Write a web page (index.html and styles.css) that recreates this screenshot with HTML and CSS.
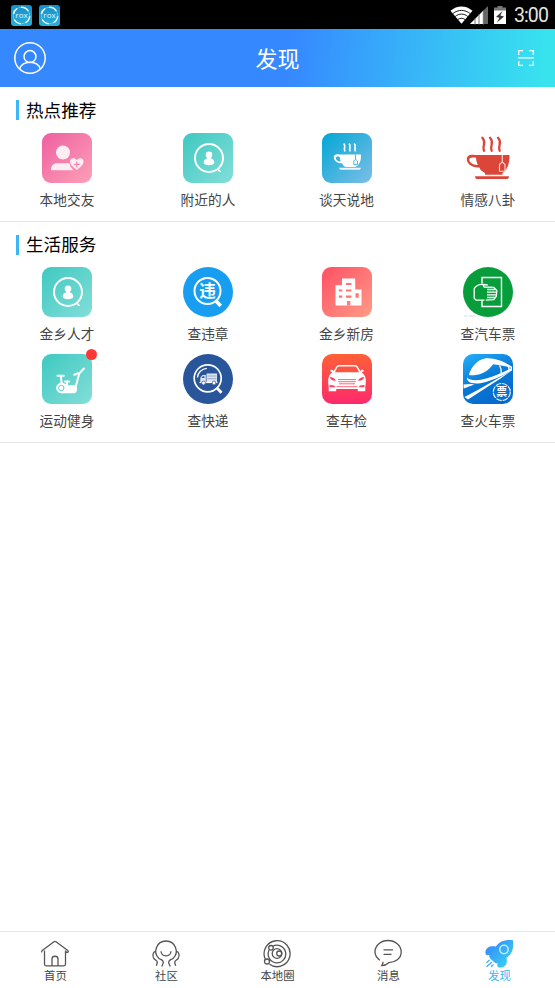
FILE: index.html
```
<!DOCTYPE html>
<html lang="zh-CN">
<head>
<meta charset="utf-8">
<title>发现</title>
<link rel="stylesheet" href="styles.css">
</head>
<body>
<svg class="defs" width="0" height="0" aria-hidden="true">
  <defs>
    <linearGradient id="pink" x1="0" y1="0" x2="1" y2="1"><stop offset="0" stop-color="#ef5fa0"/><stop offset="1" stop-color="#fca0b8"/></linearGradient>
    <linearGradient id="teal" x1="0" y1="0" x2="1" y2="1"><stop offset="0" stop-color="#3ec9c1"/><stop offset="1" stop-color="#83ded8"/></linearGradient>
    <linearGradient id="blue" x1="0" y1="0" x2="1" y2="1"><stop offset="0" stop-color="#02a6d6"/><stop offset="1" stop-color="#7dbfe6"/></linearGradient>
    <linearGradient id="coral" x1="0" y1="0" x2="1" y2="1"><stop offset="0" stop-color="#ff5065"/><stop offset="1" stop-color="#ff9c86"/></linearGradient>
    <linearGradient id="fire" x1="0" y1="0" x2="0" y2="1"><stop offset="0" stop-color="#fe6037"/><stop offset="1" stop-color="#fe2a6c"/></linearGradient>
    <linearGradient id="rail" x1="0" y1="0" x2=".5" y2="1"><stop offset="0" stop-color="#24b0fb"/><stop offset=".6" stop-color="#0878d5"/><stop offset="1" stop-color="#076bcd"/></linearGradient>
    <linearGradient id="rocket" x1="0" y1="0" x2="1" y2="1"><stop offset=".1" stop-color="#3688ff"/><stop offset="1" stop-color="#38ddec"/></linearGradient>
    <linearGradient id="app" x1="0" y1="0" x2="0" y2="1"><stop offset="0" stop-color="#168fc9"/><stop offset="1" stop-color="#28b0dc"/></linearGradient>
    <g id="rox">
      <rect width="21" height="21" rx="3" fill="url(#app)"/>
      <circle cx="10.5" cy="10.5" r="8.2" fill="none" stroke="#6cc4e4" stroke-width="1"/>
      <path d="M10 2.3A8.2 8.2 0 0 1 17.3 6M18.7 11A8.2 8.2 0 0 1 14.5 17.7M10 18.7A8.2 8.2 0 0 1 3.2 14.5M2.4 9A8.2 8.2 0 0 1 6 3.6" fill="none" stroke="#e9f8fd" stroke-width="1.5"/>
      <text x="10.5" y="12.7" class="rox-text">rox</text>
    </g>
    <g id="person">
      <circle cx="26" cy="25" r="14" fill="none" stroke="#fff" stroke-width="2"/>
      <path d="M34.7 35.6L38 38.8L35 37.5" fill="#fff" stroke="#fff" stroke-width="1"/>
      <circle cx="26" cy="21.8" r="3.3" fill="#fff"/>
      <path d="M24.5 23.500h3v1.700c2.300.5 3.800 2.200 3.800 4.400c0 2-2.200 2.600-5.300 2.600s-5.300-.6-5.300-2.600c0-2.200 1.500-3.900 3.800-4.400z" fill="#fff"/>
    </g>
  </defs>
</svg>

<div class="phone">
  <div class="status">
    <svg width="21" height="21" viewBox="0 0 21 21"><use href="#rox"/></svg>
    <svg width="21" height="21" viewBox="0 0 21 21"><use href="#rox"/></svg>
    <svg class="signals" width="58" height="20" viewBox="0 0 58 20">
      <path d="M0.5 5.8C7 .1 16 .1 22.5 5.8L11.5 18.8z" fill="#fff"/>
      <path d="M2.7 8.7C8 4.3 15 4.3 20.3 8.7M5.2 11.5C9 8.3 14 8.3 17.8 11.5M7.9 14.5C10 12.9 13 12.9 15.1 14.5" fill="none" stroke="#000" stroke-width=".9"/>
      <path d="M20 19L38 1v18z" fill="#666"/>
      <path d="M20 19L33.5 5.5V19z" fill="#fff"/>
      <path d="M25 13v7M29 9v11M33.3 5v15" stroke="#555" stroke-width=".8"/>
      <path d="M44 6V2.5h3.5V1h5v1.5H56V6z" fill="#777"/>
      <path d="M44 5.5h12v13.5H44z" fill="#fff"/>
      <path d="M52.5 6L46 12l3.5.8L47 17.5l7-6l-3.700-1z" fill="#333"/>
    </svg>
    <span class="clock">3:00</span>
  </div>

  <header class="appbar">
    <svg width="32" height="32" viewBox="0 0 32 32" fill="none" stroke="#fff" stroke-width="1.5">
      <circle cx="16" cy="16" r="15.2"/><circle cx="16" cy="14.6" r="6"/><path d="M5.8 27.2C7.3 17.9 24.7 17.9 26.2 27.2"/>
    </svg>
    <h1>发现</h1>
    <svg width="16" height="16" viewBox="0 0 16 16" fill="none" stroke="#fff" stroke-width="1.3">
      <path d="M.7 5V.7H5M11 .7h4.3V5M.7 11v4.3H5M11 15.3h4.3V11M0 7.8h16"/>
    </svg>
  </header>

  <section class="block">
    <h2>热点推荐</h2>
    <div class="grid">
      <a class="item">
        <svg viewBox="0 0 50 50"><rect width="50" height="50" rx="9" fill="url(#pink)"/>
          <g fill="#ffedf4"><circle cx="21" cy="19.5" r="7"/><path d="M9 37.2c0-4.8 2.2-7 6.5-7h12c.4 3.2 2 5.1 4.3 7z"/>
          <path d="M34.8 37C31 33.8 28 31.5 28 28.5c0-3.6 4.5-4.6 6.8-1.3c2.3-3.3 6.8-2.3 6.8 1.3c0 3-3 5.3-6.8 8.5z"/></g>
          <path d="M34.8 28.4v6M31.8 31.4h6" stroke="#f785ab" stroke-width="1.2"/>
        </svg><span>本地交友</span></a>
      <a class="item">
        <svg viewBox="0 0 50 50"><rect width="50" height="50" rx="9" fill="url(#teal)"/><use href="#person"/></svg><span>附近的人</span></a>
      <a class="item">
        <svg viewBox="0 0 50 50"><rect width="50" height="50" rx="9" fill="url(#blue)"/>
          <path d="M21.7 10.5c3 3.3-.8 3.5 1.2 8M27 10.5c3 3.3-.8 3.5 1.2 8M32.2 10.5c3 3.3-.8 3.5 1.2 8" fill="none" stroke="#fff" stroke-width="1.7"/>
          <path d="M17.5 21.5H39c.2 6-1.2 10-5.5 12.6H23.5c-1.6-1-2.7-2.2-3.4-3.8c-5.7.3-8.5-3.2-8.3-6.3c.2-2.5 2.8-3.2 5.7-2.5zM17.6 23.7c-2.3-.5-3.8-.1-3.7 1.5c.1 1.8 1.9 3.3 4.7 3.2z" fill="#fff" fill-rule="evenodd"/>
          <path d="M33.5 21.5v5M33.5 26.3l2 1.7v3.6h-3.7v-3.6z" fill="none" stroke="#40add6" stroke-width=".9"/><path d="M17 34.8h22c-.5 1.6-1 2-2 2H19c-1 0-1.5-.4-2-2z" fill="#e8f7fd"/>
        </svg><span>谈天说地</span></a>
      <a class="item">
        <svg viewBox="0 0 50 50"><path d="M19.3 4.8c5 5.3-.7 7 1.7 13M27 4.8c5 5.3-.7 7 1.7 13M35 4.8c5 5.3-.7 7 1.7 13" fill="none" stroke="#dc4639" stroke-width="2.3" stroke-linecap="round"/>
          <path d="M12.5 22H46.5c.3 9-2.7 15.5-7 18v1.8H22V40c-3-1.5-4.5-3-5.7-5.5C8 35 3.7 30 3.8 26c.1-4.1 4-5 8.7-4zM13 24.7c-4.3-.8-6.7-.1-6.7 2.1c.2 3 3.8 5.4 8.5 5.1c-1-2.2-1.6-4.5-1.8-7.2z" fill="#dc4639" fill-rule="evenodd"/>
          <path d="M39.3 22v7M39.3 28.8l2.7 2.7v6.7h-5.5v-6.7z" fill="none" stroke="#ffdcd7" stroke-width="1.1"/><path d="M12 43.3h34c0 1.9-1 2.8-2.6 2.8H14.6c-1.6 0-2.6-.9-2.6-2.8z" fill="#dc4639"/>
        </svg><span>情感八卦</span></a>
    </div>
  </section>

  <section class="block services">
    <h2>生活服务</h2>
    <div class="grid">
      <a class="item">
        <svg viewBox="0 0 50 50"><rect width="50" height="50" rx="9" fill="url(#teal)"/><use href="#person"/></svg><span>金乡人才</span></a>
      <a class="item">
        <svg viewBox="0 0 50 50"><circle cx="25" cy="25" r="25" fill="#189ef0"/>
          <circle cx="24.5" cy="24" r="13" fill="none" stroke="#fff" stroke-width="2"/><path d="M32.5 33.2l5.2 5.8" stroke="#fff" stroke-width="3.6"/>
          <text x="24.5" y="30" class="badge-char">违</text>
        </svg><span>查违章</span></a>
      <a class="item">
        <svg viewBox="0 0 50 50"><rect width="50" height="50" rx="9" fill="url(#coral)"/>
          <path d="M20 11.5h13.2v11h6.3v16H13.5V18.3H20z" fill="#fff"/>
          <path d="M24 17h5.5M16.8 23.5h3.5M24 23.5h5.5M16.8 29.7h3.5M24 29.7h5.5" stroke="#ff7474" stroke-width="2.2"/><path d="M33.5 26.3h3.3v4.4h-3.3zM25 34h3.4v4.5H25z" fill="#ff7d77"/>
        </svg><span>金乡新房</span></a>
      <a class="item">
        <svg viewBox="0 0 50 50"><circle cx="25" cy="25" r="25" fill="#069d3a"/>
          <path d="M19 16.5V10.5h19.5v29H19v-6.5" fill="none" stroke="#fff" stroke-width="1.4"/>
          <path d="M22 33.2h-9.5l-1.3-2v-9.5c2.3-3.6 5.2-4.7 9-4.2l4.8.8l1.2 1.6l5 .6c1.8.5 1.3 2 0 2.2c2.5 0 3.3 2.2 1.5 2.6c2 .3 1.5 2.7-.5 2.7c1 .8.5 2.5-1 2.6c.3 1.7-.5 2.6-2 2.6z" fill="#069d3a"/>
          <path d="M21.5 33.2H13l-1.8-2v-9.5c2.3-3.6 5.2-4.7 9-4.2l4.5.5M20 17.8l1.2 2.2l9.6.3l3 3.2l-.5 5.7l-2.5 3.5l-8 .5M24 22.5h8M24 25.2h10M24 27.9h9.5M24 30.5h8" fill="none" stroke="#fff" stroke-width="1.3"/>
          <path d="M1 49h4M6 49h6" stroke="#d6dcd7" stroke-width="1"/>
        </svg><span>查汽车票</span></a>
      <a class="item">
        <svg viewBox="0 0 50 50"><rect width="50" height="50" rx="9" fill="url(#teal)"/>
          <path d="M17 29c4-1.5 6 1.7 9.5 2.2h5.8c4 0 3.6 8-.2 8H19.5z" fill="#fff"/>
          <circle cx="19.5" cy="34" r="5.3" fill="#fff"/><circle cx="19.3" cy="34" r="2.7" fill="none" stroke="#58d0ca" stroke-width="1"/>
          <path d="M15.5 21.8h6.3M18.8 22.3l1 7.2M33.5 33.5l3.7-13.8l4.7-5.2M32.3 20.8l3.9-1.6M23 27.5h4.2M25 27.5v4" fill="none" stroke="#fff" stroke-width="2" stroke-linecap="round"/><path d="M18 35.3l2.8-2.6" stroke="#fff" stroke-width="1.2"/>
        </svg><i class="dot"></i><span>运动健身</span></a>
      <a class="item">
        <svg viewBox="0 0 50 50"><circle cx="25" cy="25" r="25" fill="#29559b"/>
          <circle cx="24.7" cy="24.3" r="13.5" fill="none" stroke="#fff" stroke-width="1.7"/><path d="M33.5 33.5l5 5.3" stroke="#fff" stroke-width="2.8"/>
          <path d="M14.4 23.5c.4-5 4.3-8.7 9.4-9.2" fill="none" stroke="#fff" stroke-width="1.3"/>
          <path d="M23.500 19.500h10.500v8.800H23.500zM17.300 28.300v-4.500l2.200-2.800h3.300v7.300z" fill="#dce5f1"/><path d="M24.300 22h9M24.300 24.700h9" stroke="#7e99c5" stroke-width=".8"/><path d="M18.600 24l1.300-1.800h1.500V24z" fill="#29559b"/><path d="M16.500 28.500h18" stroke="#fff" stroke-width="1.200"/><g fill="#fff" stroke="#29559b" stroke-width=".7"><circle cx="20.500" cy="29" r="1.900"/><circle cx="31" cy="29" r="1.900"/></g>
        </svg><span>查快递</span></a>
      <a class="item">
        <svg viewBox="0 0 50 50"><rect width="50" height="50" rx="10" fill="url(#fire)"/>
          <path d="M14.5 12.3c.8-1 1.7-1.3 3.5-1.3h14c1.8 0 2.7.3 3.5 1.3l3 5c.4-1.8 3.4-2 3.2-.2c-.2.8-1.3 1.1-2 1.1c3 2.3 4 4.7 4.1 8.2c.1 3-.3 4.500-.5 6v4.8h-7.500v-2.200H14.200v2.200H6.700v-4.800c-.2-1.500-.6-3-.5-6c.1-3.500 1.100-5.900 4.100-8.200c-.7 0-1.800-.3-2-1.100c-.2-1.800 2.800-1.600 3.200.2z" fill="#fff"/>
          <path d="M15.4 13.500c.5-.8 1.300-1 2.600-1h14c1.300 0 2.100.2 2.600 1l2.600 4.700H12.800z" fill="#fe5442"/>
          <path d="M16 25.600h18M16.300 27.700h17.400M17 29.800h16M14.500 32.700h21" stroke="#fe5565" stroke-width=".9"/><path d="M7.800 23c2.500 0 4.700 1.200 6.300 3.600c-3 .5-5.600-.4-6.300-3.600zM42.200 23c-2.500 0-4.700 1.200-6.300 3.600c3 .5 5.600-.4 6.300-3.600zM7.500 31l4.500.6l1.500 1.600H7.700zM42.500 31l-4.500.6l-1.500 1.600h5.800z" fill="#fe3e5e"/>
        </svg><span>查车检</span></a>
      <a class="item">
        <svg viewBox="0 0 50 50"><rect width="50" height="50" rx="10" fill="url(#rail)"/>
          <path d="M6 20.500C8.500 12.500 14.500 5.500 22 4.500C27 4 31.500 6.500 30.500 9C28.500 14 21 20 14 20.700C10.500 21.200 6.500 22 6 20.500z" fill="#fff"/>
          <path d="M22 4.500C31 3.500 41 7.500 49 12.700V14.300C42 11.800 35.500 10.800 29.500 10.200z" fill="#fff"/>
          <path d="M4 23.500C7 27 15 27 24 24.300C32 21.500 40 19 49 13.500V16.500C37 23 29 26.500 22 28.200C11 31 3.500 29 4 23.500z" fill="#fff"/>
          <path d="M36.500 11.500q2 3 1.700 7.500M45.500 12.500l.8 4" fill="none" stroke="#fff" stroke-width="1.300"/>
          <path d="M.5 30.500l7-.5l4 .6L.7 34.500zM1.500 43C18 35 33 25 48 17L37.500 24.500L5 45.500z" fill="#fff"/>
          <circle cx="38.800" cy="38" r="8.500" fill="#0873d1" stroke="#fff" stroke-width="1.100" stroke-dasharray="5.700 1"/><text x="38.800" y="41.900" class="ticket-char">票</text>
        </svg><span>查火车票</span></a>
    </div>
  </section>

  <main class="space"></main>

  <nav class="tabs">
    <a><svg viewBox="0 0 30 30"><path d="M4.500 11.500v13.800q0 1.500 1.500 1.500h18q1.500 0 1.500-1.500V11.500M2.200 13.200q-1-.8 0-1.600L14 2.800q1-.7 2 0l11.800 8.800q1 .8 0 1.600q-1.200.5-2.300-.8M12 26.800V20c0-3.700 6-3.700 6 0v6.800"/></svg><span>首页</span></a>
    <a><svg viewBox="0 0 30 30"><path d="M8 19.500C1.500 13.500 5.500 2 15 2s13.500 11.500 7 17.500c-1.500 1-3 1.300-3.800 2.300c-.8 1-.6 2.400 0 3.200l1 2.500M8 19.500c1.500 1 3 1.300 3.800 2.300c.8 1 .6 2.400 0 3.200l-1 2.500M10 12.300c.4 6 9.600 6 10 0M4.800 12c-3.200 1-3.500 5-2 7.300c1.300 2 3.700 2.200 3.500 4.500l-1 3M25.200 12c3.200 1 3.500 5 2 7.300c-1.300 2-3.700 2.200-3.500 4.500l1 3"/></svg><span>社区</span></a>
    <a><svg viewBox="0 0 30 30"><path d="M3.500 20.500A13 13 0 1 1 7.500 25.200M10.800 7.300A8.800 8.800 0 1 1 7 11.300"/><circle cx="15" cy="14.500" r="4.800"/><circle cx="17.200" cy="14.500" r="2.500"/><circle cx="9" cy="8.800" r="2.300"/><circle cx="5" cy="22.500" r="2.500"/></svg><span>本地圈</span></a>
    <a><svg viewBox="0 0 30 30"><path d="M6.800 21.200C4 19 2 16.500 2 13C2 6.200 8 1.500 15 1.500S28.200 6.200 28.200 13S22 23.500 15.800 23.700c-2.300 2-4.600 3-7 3q1.200-2 1.200-4M10.500 10.800h9.500M10.500 15.300h8"/></svg><span>消息</span></a>
    <a class="active"><svg viewBox="0 0 30 30"><path d="M29 1.200C21 .3 15.600 2.300 11.800 7.500C6 6.500 2.200 8.500 1.500 12.500c-.4 2 .4 3.700 1.700 3.700l2.200-.1c-.4 1.600.1 3 1.600 4.200l3 2.800c1.300 1.300 2.700 1.400 4 1.200c-1.800 2-.3 4.500 2.500 4.300c5.500-.4 7.200-4.700 6-10C28.300 15.200 30 9.500 29 1.200z" fill="url(#rocket)" stroke="none"/><circle cx="20" cy="10.500" r="4.200" stroke="#c5edff" stroke-width="1.500"/><path d="M5.500 21l-3 2.800M8 23l-5.500 4.800M9.500 25.500l-2.500 2.300" stroke="#3badff"/></svg><span>发现</span></a>
  </nav>
</div>
</body>
</html>
```

FILE: styles.css
```
* { box-sizing: border-box; }

body {
  margin: 0;
  background: #fff;
  font-family: "Noto Sans CJK SC", sans-serif;
}

svg { display: block; flex: none; }
.defs { position: absolute; }

.phone {
  width: 555px;
  height: 988px;
  display: flex;
  flex-direction: column;
}

.status {
  height: 29px;
  padding: 1px 7px 0 11px;
  background: #000;
  display: flex;
  align-items: center;
  gap: 7px;
}
.signals { margin-left: auto; margin-top: -1px; }
.clock {
  margin: 2px 0 0 -1px;
  font: 19.5px/28px Roboto, sans-serif;
  color: #e4e4e4;
  letter-spacing: -.9px;
}
.rox-text {
  font: 8px "Open Sans", sans-serif;
  fill: #e5f8ff;
  text-anchor: middle;
}

.appbar {
  height: 58px;
  padding: 0 21px 0 14px;
  display: grid;
  grid-template-columns: 40px 1fr 33px;
  align-items: center;
  background: linear-gradient(96deg, #3688ff 52%, #37b4f8 74%, #38e3ee 98%);
}
.appbar h1 {
  margin: -3px 0 0;
  color: #fff;
  font-size: 22px;
  font-weight: 400;
  line-height: 30px;
  text-align: center;
}
.appbar svg:last-child { justify-self: end; }

.block {
  padding-top: 13px;
  height: 135px;
  border-bottom: 1px solid #e6e6e6;
}
.block h2 {
  margin: 0 0 13px 16px;
  height: 20px;
  padding-left: 7px;
  border-left: 3px solid #3cb6f5;
  color: #000;
  font-size: 17.6px;
  font-weight: 400;
  line-height: 20px;
}
.services { height: 221px; }
.services h2 { margin-bottom: 12px; line-height: 18px; }

.grid {
  display: grid;
  grid-template-columns: 141px 138.5px 141.5px 55px;
  grid-auto-rows: 87px;
  padding-left: 39.5px;
}
.item {
  position: relative;
  width: 55px;
  display: flex;
  flex-direction: column;
  align-items: center;
}
.item svg { width: 50px; height: 50px; }
.item span {
  margin-top: 5px;
  color: #444;
  font-size: 13.7px;
  line-height: 22px;
  white-space: nowrap;
}
.dot {
  position: absolute;
  top: -5px;
  right: -2px;
  width: 11px;
  height: 11px;
  border-radius: 50%;
  background: #fe3839;
}
.badge-char {
  font: 700 16.5px "Noto Sans CJK SC", sans-serif;
  fill: #fff;
  text-anchor: middle;
}
.ticket-char {
  font: 700 11px "Noto Sans CJK SC", sans-serif;
  fill: #fff;
  text-anchor: middle;
}

.space { flex: 1; }

.tabs {
  height: 57px;
  border-top: 1px solid #e8e8e8;
  display: grid;
  grid-template-columns: repeat(5, 1fr);
}
.tabs a {
  display: flex;
  flex-direction: column;
  align-items: center;
  padding-top: 7px;
  color: #444;
}
.tabs svg {
  width: 30px;
  height: 30px;
  margin-left: -1px;
  fill: none;
  stroke: #555;
  stroke-width: 1.3;
}
.tabs span { margin-top: -1px; font-size: 11.4px; line-height: 15px; }
.tabs .active { color: #3cb3f5; }
```
